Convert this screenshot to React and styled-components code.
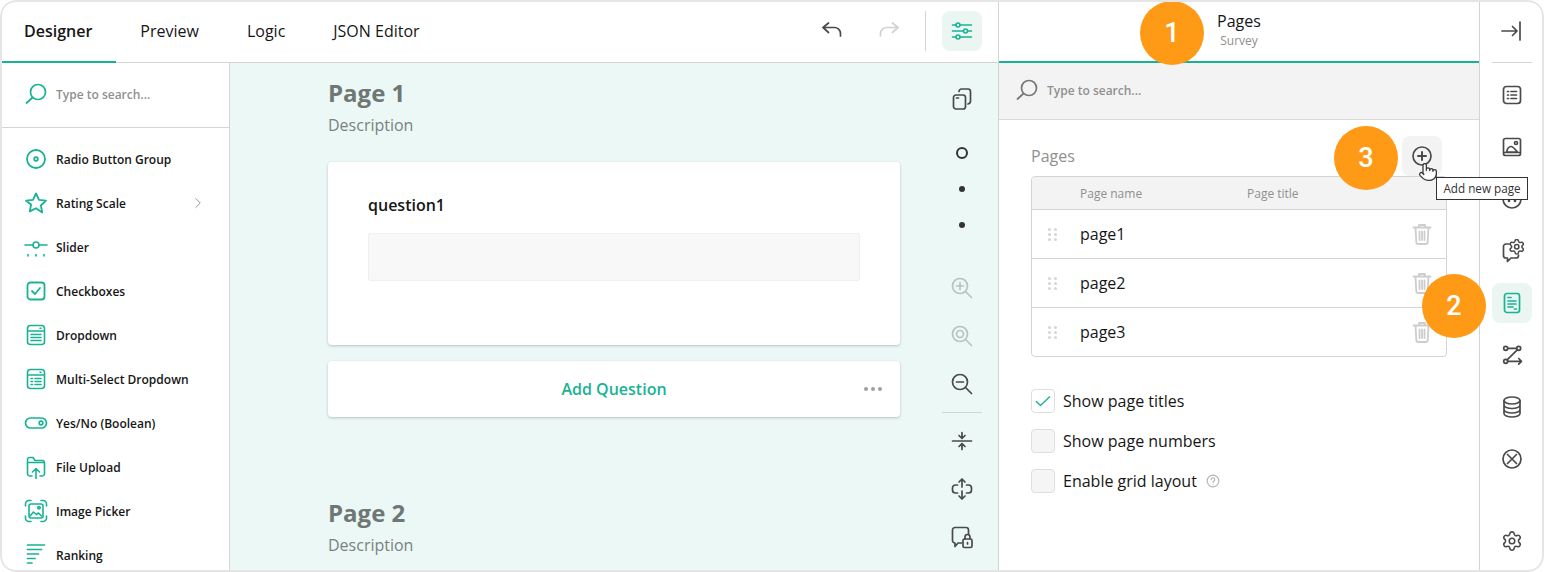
import React from "react";
import styled, { createGlobalStyle } from "styled-components";
import { Settings, Pointer } from "lucide-react";

const GREEN = "#19b394";
const DARK = "#4a4a4a";
const FONT = '"Open Sans", "Noto Sans", sans-serif';

const Global = createGlobalStyle`
  html, body { margin: 0; padding: 0; background: #fff; }
  * { box-sizing: border-box; }
`;

const Frame = styled.div`
  position: relative;
  width: 1544px;
  height: 572px;
  border-radius: 16px;
  overflow: hidden;
  background: #fff;
  font-family: ${FONT};
  color: #161616;
  display: flex;
  &::after {
    content: "";
    position: absolute;
    inset: 0;
    border: 2px solid #e5e5e5;
    border-radius: 16px;
    pointer-events: none;
  }
`;

const Main = styled.div`
  width: 999px;
  flex: none;
  display: flex;
  flex-direction: column;
  border-right: 1px solid #d4d4d4;
`;
const TopBar = styled.div`
  height: 63px;
  flex: none;
  display: flex;
  align-items: stretch;
  border-bottom: 1px solid #d4d4d4;
`;
const Tab = styled.div`
  height: 63px;
  padding: 0 24px;
  display: flex;
  align-items: center;
  font-size: 16px;
  line-height: 24px;
  font-weight: ${(p) => (p.$active ? 600 : 400)};
  border-bottom: 2px solid ${(p) => (p.$active ? GREEN : "transparent")};
`;
const TopActions = styled.div`
  margin-left: auto;
  display: flex;
  align-items: center;
  padding: 0 16px 1px 0;
`;
const TopIcon = styled.div`
  width: 40px;
  height: 40px;
  margin-right: 17px;
  display: flex;
  align-items: center;
  justify-content: center;
  &:nth-child(2) {
    margin-right: 16px;
  }
`;
const TopDivider = styled.div`
  width: 1px;
  height: 40px;
  background: #d4d4d4;
  margin-right: 16px;
`;
const ActiveBtn = styled.div`
  width: 40px;
  height: 40px;
  border-radius: 8px;
  background: #ebf6f3;
  display: flex;
  align-items: center;
  justify-content: center;
`;
const Body = styled.div`
  flex: 1;
  min-height: 0;
  display: flex;
`;
const Toolbox = styled.div`
  width: 230px;
  flex: none;
  border-right: 1px solid #d4d4d4;
  overflow: hidden;
`;
const ToolboxSearch = styled.div`
  height: 65px;
  padding: 0 0 2px 24px;
  display: flex;
  align-items: center;
  gap: 8px;
  border-bottom: 1px solid #d4d4d4;
`;
const SearchText = styled.span`
  font-size: 12px;
  font-weight: 600;
  color: #909090;
`;
const ToolList = styled.div`
  padding-top: 9px;
`;
const ToolItem = styled.div`
  height: 44px;
  padding: 0 24px;
  display: flex;
  align-items: center;
  gap: 8px;
  font-size: 12px;
  font-weight: 600;
`;
const Chevron = styled.span`
  margin-left: auto;
  display: flex;
  margin-right: -2px;
`;
const Canvas = styled.div`
  flex: 1;
  background: #ebf8f6;
  display: flex;
  padding-left: 98px;
  gap: 42px;
  overflow: hidden;
`;
const PageCol = styled.div`
  width: 572px;
  flex: none;
  padding-top: 14px;
`;
const PageTitle = styled.div`
  font-size: 24px;
  line-height: 32px;
  font-weight: 700;
  color: #6f7775;
  margin-top: ${(p) => p.$top || 0}px;
`;
const PageDesc = styled.div`
  font-size: 16px;
  line-height: 24px;
  margin-top: 4px;
  color: #7a8280;
`;
const Card = styled.div`
  background: #fff;
  border-radius: 4px;
  box-shadow: 0 1px 3px rgba(0, 0, 0, 0.22);
`;
const QuestionCard = styled(Card)`
  margin-top: 25px;
  height: 183px;
  padding: 31px 40px 0;
`;
const QuestionTitle = styled.div`
  font-size: 16px;
  line-height: 24px;
  font-weight: 600;
`;
const FakeInput = styled.div`
  margin-top: 16px;
  height: 48px;
  background: #f8f8f8;
  border-radius: 3px;
  box-shadow: inset 0 0 0 1px #efefef, inset 0 1px 1px rgba(0, 0, 0, 0.06);
`;
const AddCard = styled(Card)`
  position: relative;
  margin-top: 16px;
  height: 56px;
  display: flex;
  align-items: center;
  justify-content: center;
  color: ${GREEN};
  font-size: 16px;
  font-weight: 600;
`;
const More = styled.span`
  position: absolute;
  right: 18px;
  top: 26px;
  display: flex;
  gap: 3px;
  & i {
    width: 4px;
    height: 4px;
    border-radius: 50%;
    background: #a0a0a0;
  }
`;
const Tools = styled.div`
  width: 40px;
  flex: none;
  padding-top: 12px;
  display: flex;
  flex-direction: column;
`;
const Tool = styled.div`
  height: ${(p) => p.$h || 48}px;
  margin-top: ${(p) => p.$mt || 0}px;
  flex: none;
  display: flex;
  align-items: center;
  justify-content: center;
`;
const Ring = styled.span`
  width: 12px;
  height: 12px;
  border-radius: 50%;
  border: 2px solid #333;
`;
const Dot = styled.span`
  width: 6px;
  height: 6px;
  border-radius: 50%;
  background: #333;
`;
const ToolLine = styled.div`
  height: 1px;
  flex: none;
  background: #cfd6d4;
  margin: 4px 0;
`;

const Panel = styled.div`
  width: 481px;
  flex: none;
  border-right: 1px solid #d4d4d4;
  display: flex;
  flex-direction: column;
`;
const PanelHead = styled.div`
  height: 63px;
  flex: none;
  border-bottom: 2px solid ${GREEN};
  display: flex;
  flex-direction: column;
  align-items: center;
  padding-top: 9px;
`;
const PanelTitle = styled.div`
  font-size: 16px;
  line-height: 24px;
`;
const PanelSub = styled.div`
  font-size: 12px;
  line-height: 16px;
  color: #8f8f8f;
`;
const PanelSearch = styled.div`
  height: 57px;
  flex: none;
  background: #f3f3f3;
  border-bottom: 1px solid #d9d9d9;
  padding: 0 0 2px 16px;
  display: flex;
  align-items: center;
  gap: 8px;
`;
const PanelBody = styled.div`
  padding: 16px 32px;
`;
const TitleRow = styled.div`
  height: 40px;
  display: flex;
  align-items: center;
  justify-content: space-between;
  padding-right: 5px;
`;
const SectionLabel = styled.div`
  font-size: 16px;
  color: #8f8f8f;
`;
const AddBtn = styled.div`
  width: 40px;
  height: 40px;
  background: #f3f3f3;
  border-radius: 8px;
  display: flex;
  align-items: center;
  justify-content: center;
`;
const Table = styled.div`
  border: 1px solid #d4d4d4;
  border-radius: 4px;
  overflow: hidden;
`;
const TableRow = styled.div`
  display: grid;
  grid-template-columns: 48px 167px 1fr 50px;
  align-items: center;
  height: 49px;
  border-top: 1px solid #d4d4d4;
  font-size: 16px;
`;
const TableHead = styled(TableRow)`
  height: 32px;
  border-top: none;
  background: #f3f3f3;
  font-size: 12px;
  color: #8f8f8f;
  font-weight: 400;
`;
const HeadCell = styled.div`
  grid-column: ${(p) => p.$col};
`;
const Drag = styled.div`
  display: grid;
  grid-template-columns: 3px 3px;
  grid-auto-rows: 3px;
  gap: 2px 3px;
  margin-left: 16px;
  & i {
    background: #d6d6d6;
    border-radius: 50%;
  }
`;
const TrashCell = styled.div`
  display: flex;
  justify-content: center;
  margin-left: 1px;
`;
const Options = styled.div`
  margin-top: 32px;
  display: flex;
  flex-direction: column;
  gap: 16px;
`;
const Option = styled.div`
  height: 24px;
  display: flex;
  align-items: center;
  font-size: 16px;
`;
const Box = styled.div`
  width: 24px;
  height: 24px;
  margin-right: 8px;
  border-radius: 4px;
  border: 1px solid #dedede;
  background: ${(p) => (p.$on ? "#fff" : "#f5f5f5")};
  display: flex;
  align-items: center;
  justify-content: center;
`;
const Help = styled.span`
  display: flex;
  margin-left: 9px;
`;

const Rail = styled.div`
  flex: 1;
  display: flex;
  flex-direction: column;
  align-items: center;
`;
const RailHead = styled.div`
  width: 40px;
  height: 63px;
  flex: none;
  border-bottom: 1px solid #d4d4d4;
  display: flex;
  align-items: center;
  justify-content: center;
  padding-bottom: 1px;
  margin-bottom: 12px;
`;
const RailBtn = styled.div`
  width: 40px;
  height: 40px;
  flex: none;
  margin-bottom: 12px;
  margin-top: ${(p) => p.$mt || 0}px;
  border-radius: 8px;
  background: ${(p) => (p.$active ? "#ebf6f3" : "transparent")};
  display: flex;
  align-items: center;
  justify-content: center;
`;

const Badge = styled.div`
  position: absolute;
  left: ${(p) => p.$x - 32}px;
  top: ${(p) => p.$y - 32}px;
  width: 64px;
  height: 64px;
  border-radius: 50%;
  background: #ff9a17;
  color: #fff;
  display: flex;
  align-items: center;
  justify-content: center;
  font-family: Roboto, sans-serif;
  font-size: 27px;
  font-weight: 500;
`;
const Tooltip = styled.div`
  position: absolute;
  left: 1436px;
  top: 177px;
  width: 92px;
  height: 23px;
  border: 1px solid #333;
  background: #fff;
  font-size: 11.7px;
  line-height: 20px;
  text-align: center;
  color: #333;
  white-space: nowrap;
`;
const Cursor = styled.div`
  position: absolute;
  left: 1418px;
  top: 162px;
  display: flex;
  & svg {
    fill: #fff;
  }
`;

const Svg = styled.svg`
  flex: none;
  display: block;
  fill: none;
  stroke: ${(p) => p.$c || DARK};
  stroke-width: ${(p) => p.$w || 2};
  stroke-linecap: round;
  stroke-linejoin: round;
`;
const Ic = ({ c, w, s = 24, children }) => (
  <Svg $c={c} $w={w} width={s} height={s} viewBox="0 0 24 24">
    {children}
  </Svg>
);

const SearchIcon = ({ c }) => (
  <Ic c={c} w={1.7}>
    <circle cx="14" cy="10" r="7.5" />
    <path d="M8.5 15.5L2.5 21" />
  </Ic>
);
const IRadio = () => (
  <Ic c={GREEN} w={1.8}>
    <circle cx="12" cy="12" r="9" />
    <circle cx="12" cy="12" r="1.8" />
  </Ic>
);
const IStar = () => (
  <Ic c={GREEN} w={1.8}>
    <path d="M12 2.5l3 6.3 7 .9-5.1 4.8 1.3 6.9L12 17.2l-6.2 3.2 1.3-6.9L2 9.7l7-.9z" />
  </Ic>
);
const ISlider = () => (
  <Ic c={GREEN} w={1.6}>
    <path d="M1 10h8M15 10h8" />
    <circle cx="12" cy="10" r="3" />
    <path d="M4 19.5v1.5M12 19.5v1.5M20 19.5v1.5" />
  </Ic>
);
const ICheck = () => (
  <Ic c={GREEN} w={1.8}>
    <rect x="3.5" y="3.500" width="17" height="17" rx="3" />
    <path d="M8 12l3 3 5-6" />
  </Ic>
);
const IDropdown = () => (
  <Ic c={GREEN} w={1.6}>
    <rect x="3.5" y="2.5" width="17" height="19" rx="3" />
    <path d="M4 8h16M7 11.5h10M7 14.5h10M7 17.5h10M16 5.2h1" />
  </Ic>
);
const IMulti = () => (
  <Ic c={GREEN} w={1.6}>
    <rect x="3.5" y="2.5" width="17" height="19" rx="3" />
    <path d="M4 8h16M7 11.5h1.5M11 11.5h6M7 14.5h1.5M11 14.5h6M7 17.5h1.5M11 17.5h6M16 5.2h1" />
  </Ic>
);
const IBool = () => (
  <Ic c={GREEN} w={1.7}>
    <rect x="1.5" y="7" width="21" height="10" rx="5" />
    <circle cx="17" cy="12" r="1.8" />
  </Ic>
);
const IFile = () => (
  <Ic c={GREEN} w={1.6}>
    <path d="M8 21H6a2.5 2.5 0 0 1-2.5-2.5V4.5A2 2 0 0 1 5.500 2.500H9l2 3h8a2 2 0 0 1 1.500 2v11A2.500 2.500 0 0 1 18 21h-2" />
    <path d="M4 7.500h16M12 23.500V14M8.500 17l3.500-3.500 3.500 3.500" />
  </Ic>
);
const IImagePick = () => (
  <Ic c={GREEN} w={1.6}>
    <path d="M1.500 7V5a3.500 3.500 0 0 1 3.500-3.500h2M17 1.500h2A3.500 3.500 0 0 1 22.500 5v2M22.500 17v2a3.500 3.500 0 0 1-3.500 3.500h-2M7 22.500H5A3.500 3.500 0 0 1 1.500 19v-2" />
    <rect x="5" y="5" width="14" height="14" rx="2" />
    <path d="M6 17l3.500-4 3 2.500 2-1.500 3 3" />
    <circle cx="15" cy="8.800" r="1.200" />
  </Ic>
);
const IRanking = () => (
  <Ic c={GREEN} w={1.7}>
    <path d="M3.500 2h17M3.500 6.500h14M3.500 11h11M3.500 15.500h7.500M3.500 20h4.500" />
  </Ic>
);
const IChev = () => (
  <Ic c="#8a8a8a" w={1.2} s={18}>
    <path d="M9 6l6 6-6 6" />
  </Ic>
);
const IUndo = () => (
  <Ic c={DARK} w={1.7}>
    <path d="M3 8.500h11A6 6 0 0 1 20.500 14.500v2.500M3 8.500L8.500 4M3 8.500l5.500 5" />
  </Ic>
);
const IRedo = () => (
  <Ic c="#d2d2d2" w={1.7}>
    <path d="M21 8.500H10A6 6 0 0 0 3.500 14.500v2.500M21 8.500L15.500 4M21 8.500l-5.500 5" />
  </Ic>
);
const ISliders = () => (
  <Ic c={GREEN} w={1.6}>
    <path d="M2.500 6H6M10 6h11.500M2.500 12h11M17.500 12h4M2.500 18H6M10 18h11.500" />
    <circle cx="8" cy="6" r="2" />
    <circle cx="15.500" cy="12" r="2" />
    <circle cx="8" cy="18" r="2" />
  </Ic>
);
const ICopy = () => (
  <Ic c={DARK} w={1.7}>
    <rect x="3.500" y="8" width="12" height="14" rx="2.500" />
    <path d="M9 4.500a2.500 2.500 0 0 1 2.500-2.500H18a2.500 2.500 0 0 1 2.500 2.500v10A3 3 0 0 1 18 17" />
    <path d="M6.500 11h2" />
  </Ic>
);
const IZoomIn = () => (
  <Ic c="#b5c4c0" w={1.7}>
    <circle cx="10" cy="10" r="7.500" />
    <path d="M15.500 15.500l6 6M6.500 10h7M10 6.500v7" />
  </Ic>
);
const IZoomFit = () => (
  <Ic c="#b5c4c0" w={1.7}>
    <circle cx="10" cy="10" r="7.500" />
    <circle cx="10" cy="10" r="3.500" />
    <path d="M15.500 15.500l6 6" />
  </Ic>
);
const IZoomOut = () => (
  <Ic c={DARK} w={1.7}>
    <circle cx="10" cy="10" r="7.500" />
    <path d="M15.500 15.500l6 6M6.500 10h7" />
  </Ic>
);
const ICollapseV = () => (
  <Ic c={DARK} w={1.7}>
    <path d="M2.500 12h19M12 3.500V9M9 6.500L12 9.500l3-3M12 20.500V15M9 17.500l3-3 3 3" />
  </Ic>
);
const IExpand = () => (
  <Ic c={DARK} w={1.7}>
    <path d="M7.500 8H5.500A3 3 0 0 0 2.500 11v2a3 3 0 0 0 3 3h2M16.500 8h2a3 3 0 0 1 3 3v2a3 3 0 0 1-3 3h-2M12 2v8M9 5l3-3 3 3M12 14v8M9 19l3 3 3-3" />
  </Ic>
);
const IChatLock = () => (
  <Ic c={DARK} w={1.7}>
    <path d="M11.500 18H8l-3 3.500V18H5A2.500 2.500 0 0 1 2.500 15.500V5A2.500 2.500 0 0 1 5 2.500h11A2.500 2.500 0 0 1 18.500 5v4" />
    <rect x="13" y="14" width="9" height="8.500" rx="1.500" />
    <path d="M15 14v-2a2.500 2.500 0 0 1 5 0v2M17.500 17.500v1.500" />
  </Ic>
);
const ICollapse = () => (
  <Ic c={DARK} w={1.7}>
    <path d="M2 12h15M12.500 7.500L17 12l-4.500 4.500M20 3v18" />
  </Ic>
);
const IList = () => (
  <Ic c={DARK} w={1.7}>
    <rect x="3.500" y="3.500" width="17" height="17" rx="3" />
    <path d="M7.500 8.500h1M11 8.500h5.500M7.500 12h1M11 12h5.500M7.500 15.500h1M11 15.500h5.500" />
  </Ic>
);
const IImage = () => (
  <Ic c={DARK} w={1.7}>
    <rect x="3.500" y="3.500" width="17" height="17" rx="2" />
    <path d="M6.500 17c1-4 3-5.500 4.500-5.500S15 14 17.500 17zM4 17.500h16" />
    <circle cx="16" cy="8" r="1.500" />
  </Ic>
);
const IFace = () => (
  <Ic c={DARK} w={1.7}>
    <circle cx="12" cy="12" r="9" />
    <path d="M9 13v1M15 13v1" strokeWidth="2.500" />
  </Ic>
);
const IChatGear = () => (
  <Ic c={DARK} w={1.7}>
    <path d="M9 5H6A2.500 2.500 0 0 0 3.500 7.500v9A2.500 2.500 0 0 0 6 19h1.500v3.500L11 19h5a2.500 2.500 0 0 0 2.500-2.500V16" />
    <Settings x="8" y="-1" width="17.500" height="17.500" strokeWidth="2.100" color={DARK} />
  </Ic>
);
const IDoc = () => (
  <Ic c={GREEN} w={1.7}>
    <rect x="4.500" y="2.500" width="15" height="19" rx="2.500" />
    <path d="M8 6.500h3M8 10h8M8 13h8M8 16h5M14.500 18h2" />
  </Ic>
);
const IFlow = () => (
  <Ic c={DARK} w={1.7}>
    <circle cx="5.700" cy="5.300" r="2" />
    <circle cx="18.700" cy="5.300" r="2" />
    <circle cx="5.700" cy="18.300" r="2" />
    <path d="M7.700 5.300h9M17.300 6.800L7.100 16.800M7.700 18.300H21.500M18.700 15.500l2.800 2.800-2.800 2.800" />
  </Ic>
);
const IDb = () => (
  <Ic c={DARK} w={1.7}>
    <ellipse cx="12" cy="5.500" rx="8" ry="3.500" />
    <path d="M4 5.500v13c0 2 3.600 3.500 8 3.500s8-1.500 8-3.500v-13M4 10c0 2 3.600 3.500 8 3.500s8-1.500 8-3.500M4 14.500c0 2 3.600 3.500 8 3.500s8-1.500 8-3.500" />
  </Ic>
);
const IClear = () => (
  <Ic c={DARK} w={1.7}>
    <circle cx="12" cy="12" r="9" />
    <path d="M7.500 7.500l9 9M16.500 7.500l-9 9" />
  </Ic>
);
const IPlusCircle = () => (
  <Ic c={DARK} w={1.7}>
    <circle cx="12" cy="12" r="9" />
    <path d="M8 12h8M12 8v8" strokeWidth="2" />
  </Ic>
);
const ITrash = () => (
  <Ic c="#cdcdcd" w={1.8}>
    <path d="M3.500 5.500h17M9 5.500V3h6v2.500M5.500 5.500l.8 14.500a2 2 0 0 0 2 2h7.400a2 2 0 0 0 2-2l.8-14.500M9.500 9.500v8.500M12 9.500v8.500M14.500 9.500v8.500" />
  </Ic>
);
const ICheckMark = () => (
  <Ic c={GREEN} w={1.6} s={20}>
    <path d="M4 12.500l5 5L20 7" />
  </Ic>
);
const IHelp = () => (
  <Ic c="#b5b5b5" w={2} s={14}>
    <circle cx="12" cy="12" r="10" />
    <path d="M9 9.500a3 3 0 1 1 4.500 2.600c-1 .6-1.500 1.200-1.500 2.400M12 17.500v.2" />
  </Ic>
);

const toolbox = [
  ["Radio Button Group", IRadio],
  ["Rating Scale", IStar, true],
  ["Slider", ISlider],
  ["Checkboxes", ICheck],
  ["Dropdown", IDropdown],
  ["Multi-Select Dropdown", IMulti],
  ["Yes/No (Boolean)", IBool],
  ["File Upload", IFile],
  ["Image Picker", IImagePick],
  ["Ranking", IRanking],
];
const rail = [IList, IImage, IFace, IChatGear, IDoc, IFlow, IDb, IClear];

export default function App() {
  return (
    <Frame>
      <Global />
      <Main>
        <TopBar>
          <Tab $active>Designer</Tab>
          <Tab>Preview</Tab>
          <Tab>Logic</Tab>
          <Tab>JSON Editor</Tab>
          <TopActions>
            <TopIcon><IUndo /></TopIcon>
            <TopIcon><IRedo /></TopIcon>
            <TopDivider />
            <ActiveBtn><ISliders /></ActiveBtn>
          </TopActions>
        </TopBar>
        <Body>
          <Toolbox>
            <ToolboxSearch>
              <SearchIcon c={GREEN} />
              <SearchText>Type to search...</SearchText>
            </ToolboxSearch>
            <ToolList>
              {toolbox.map(([name, I, more]) => (
                <ToolItem key={name}>
                  <I />
                  {name}
                  {more && <Chevron><IChev /></Chevron>}
                </ToolItem>
              ))}
            </ToolList>
          </Toolbox>
          <Canvas>
            <PageCol>
              <PageTitle>Page 1</PageTitle>
              <PageDesc>Description</PageDesc>
              <QuestionCard>
                <QuestionTitle>question1</QuestionTitle>
                <FakeInput />
              </QuestionCard>
              <AddCard>
                Add Question
                <More><i /><i /><i /></More>
              </AddCard>
              <PageTitle $top={80}>Page 2</PageTitle>
              <PageDesc>Description</PageDesc>
            </PageCol>
            <Tools>
              <Tool><ICopy /></Tool>
              <Tool $h={36} $mt={12}><Ring /></Tool>
              <Tool $h={36}><Dot /></Tool>
              <Tool $h={36}><Dot /></Tool>
              <Tool $mt={21}><IZoomIn /></Tool>
              <Tool><IZoomFit /></Tool>
              <Tool><IZoomOut /></Tool>
              <ToolLine />
              <Tool><ICollapseV /></Tool>
              <Tool><IExpand /></Tool>
              <Tool><IChatLock /></Tool>
            </Tools>
          </Canvas>
        </Body>
      </Main>
      <Panel>
        <PanelHead>
          <PanelTitle>Pages</PanelTitle>
          <PanelSub>Survey</PanelSub>
        </PanelHead>
        <PanelSearch>
          <SearchIcon c="#777" />
          <SearchText>Type to search...</SearchText>
        </PanelSearch>
        <PanelBody>
          <TitleRow>
            <SectionLabel>Pages</SectionLabel>
            <AddBtn><IPlusCircle /></AddBtn>
          </TitleRow>
          <Table>
            <TableHead>
              <HeadCell $col={2}>Page name</HeadCell>
              <HeadCell $col={3}>Page title</HeadCell>
            </TableHead>
            {["page1", "page2", "page3"].map((p) => (
              <TableRow key={p}>
                <Drag>
                  <i /><i /><i /><i /><i /><i />
                </Drag>
                <div>{p}</div>
                <div />
                <TrashCell><ITrash /></TrashCell>
              </TableRow>
            ))}
          </Table>
          <Options>
            <Option>
              <Box $on><ICheckMark /></Box>
              Show page titles
            </Option>
            <Option>
              <Box />
              Show page numbers
            </Option>
            <Option>
              <Box />
              Enable grid layout
              <Help><IHelp /></Help>
            </Option>
          </Options>
        </PanelBody>
      </Panel>
      <Rail>
        <RailHead><ICollapse /></RailHead>
        {rail.map((I, i) => (
          <RailBtn key={i} $active={i === 4}>
            <I />
          </RailBtn>
        ))}
        <RailBtn $mt={30}><Settings size={22} color={DARK} strokeWidth={1.7} /></RailBtn>
      </Rail>
      <Badge $x={1172} $y={33}>1</Badge>
      <Badge $x={1454} $y={306}>2</Badge>
      <Badge $x={1366} $y={158}>3</Badge>
      <Tooltip>Add new page</Tooltip>
      <Cursor><Pointer size={20} color="#333" strokeWidth={1.5} /></Cursor>
    </Frame>
  );
}
